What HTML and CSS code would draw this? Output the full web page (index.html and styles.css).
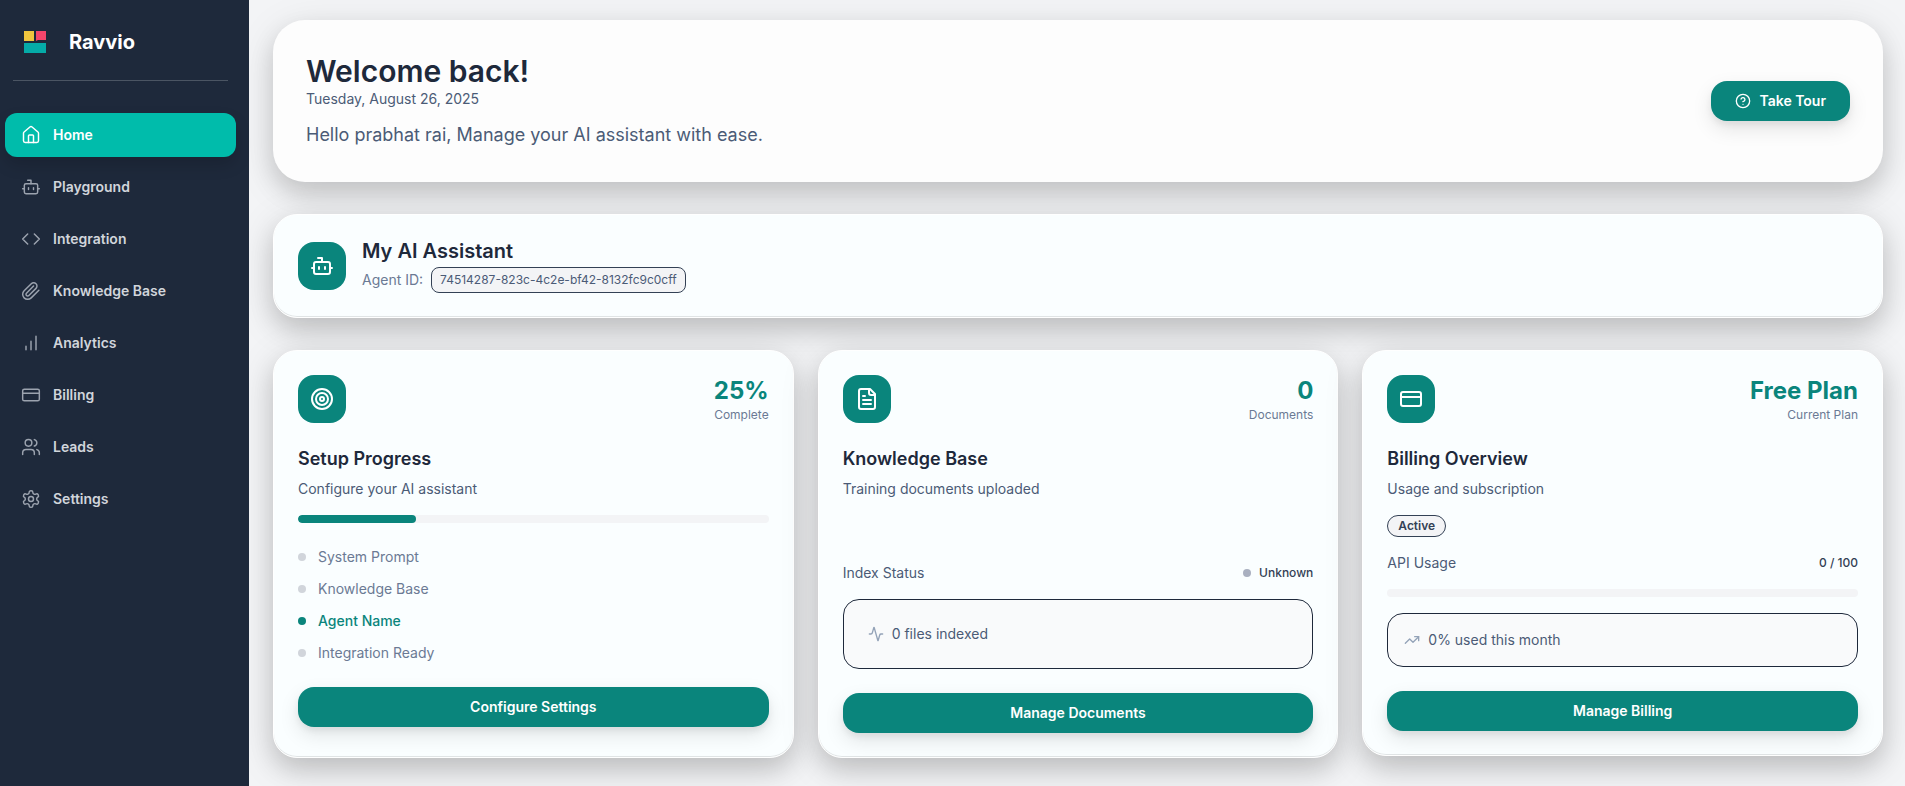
FILE: index.html
```html
<!DOCTYPE html>
<html lang="en">
<head>
<meta charset="utf-8">
<meta name="viewport" content="width=device-width, initial-scale=1">
<title>Ravvio</title>
<link rel="stylesheet" href="styles.css">
</head>
<body>
<svg class="sprite" aria-hidden="true">
  <symbol id="i-home" viewBox="0 0 24 24"><path d="M15 21v-8a1 1 0 0 0-1-1h-4a1 1 0 0 0-1 1v8"/><path d="M3 10a2 2 0 0 1 .709-1.528l7-5.999a2 2 0 0 1 2.582 0l7 5.999A2 2 0 0 1 21 10v9a2 2 0 0 1-2 2H5a2 2 0 0 1-2-2z"/></symbol>
  <symbol id="i-bot" viewBox="0 0 24 24"><path d="M12 8V4H8"/><rect width="16" height="12" x="4" y="8" rx="2"/><path d="M2 14h2M20 14h2M15 13v2M9 13v2"/></symbol>
  <symbol id="i-code" viewBox="0 0 24 24"><path d="m16 18 6-6-6-6M8 6l-6 6 6 6"/></symbol>
  <symbol id="i-clip" viewBox="0 0 24 24"><path d="m21.44 11.05-9.19 9.19a6 6 0 0 1-8.49-8.49l8.57-8.57A4 4 0 1 1 18 8.84l-8.59 8.57a2 2 0 0 1-2.83-2.83l8.49-8.48"/></symbol>
  <symbol id="i-bars" viewBox="0 0 24 24"><path d="M12 20V10M18 20V4M6 20v-4"/></symbol>
  <symbol id="i-card" viewBox="0 0 24 24"><rect width="20" height="14" x="2" y="5" rx="2"/><path d="M2 10h20"/></symbol>
  <symbol id="i-users" viewBox="0 0 24 24"><path d="M16 21v-2a4 4 0 0 0-4-4H6a4 4 0 0 0-4 4v2"/><circle cx="9" cy="7" r="4"/><path d="M22 21v-2a4 4 0 0 0-3-3.87M16 3.13a4 4 0 0 1 0 7.75"/></symbol>
  <symbol id="i-gear" viewBox="0 0 24 24"><path d="M12.22 2h-.44a2 2 0 0 0-2 2v.18a2 2 0 0 1-1 1.73l-.43.25a2 2 0 0 1-2 0l-.15-.08a2 2 0 0 0-2.73.73l-.22.38a2 2 0 0 0 .73 2.73l.15.1a2 2 0 0 1 1 1.72v.51a2 2 0 0 1-1 1.74l-.15.09a2 2 0 0 0-.73 2.73l.22.38a2 2 0 0 0 2.73.73l.15-.08a2 2 0 0 1 2 0l.43.25a2 2 0 0 1 1 1.73V20a2 2 0 0 0 2 2h.44a2 2 0 0 0 2-2v-.18a2 2 0 0 1 1-1.73l.43-.25a2 2 0 0 1 2 0l.15.08a2 2 0 0 0 2.73-.73l.22-.39a2 2 0 0 0-.73-2.73l-.15-.08a2 2 0 0 1-1-1.74v-.5a2 2 0 0 1 1-1.74l.15-.09a2 2 0 0 0 .73-2.73l-.22-.38a2 2 0 0 0-2.73-.73l-.15.08a2 2 0 0 1-2 0l-.43-.25a2 2 0 0 1-1-1.73V4a2 2 0 0 0-2-2z"/><circle cx="12" cy="12" r="3"/></symbol>
  <symbol id="i-help" viewBox="0 0 24 24"><circle cx="12" cy="12" r="10"/><path d="M9.09 9a3 3 0 0 1 5.83 1c0 2-3 3-3 3M12 17h.01"/></symbol>
  <symbol id="i-target" viewBox="0 0 24 24"><circle cx="12" cy="12" r="10"/><circle cx="12" cy="12" r="6"/><circle cx="12" cy="12" r="2"/></symbol>
  <symbol id="i-file" viewBox="0 0 24 24"><path d="M15 2H6a2 2 0 0 0-2 2v16a2 2 0 0 0 2 2h12a2 2 0 0 0 2-2V7Z"/><path d="M14 2v4a2 2 0 0 0 2 2h4M10 9H8M16 13H8M16 17H8"/></symbol>
  <symbol id="i-pulse" viewBox="0 0 24 24"><path d="M22 12h-2.48a2 2 0 0 0-1.93 1.46l-2.35 8.36a.25.25 0 0 1-.48 0L9.24 2.18a.25.25 0 0 0-.48 0l-2.35 8.36A2 2 0 0 1 4.49 12H2"/></symbol>
  <symbol id="i-trend" viewBox="0 0 24 24"><path d="m22 7-8.5 8.5-5-5L2 17"/><path d="M16 7h6v6"/></symbol>
</svg>

<div class="app">
  <aside class="sidebar">
    <div class="brand">
      <svg class="logo" viewBox="0 0 22 22" aria-hidden="true">
        <path fill="#f0c53e" d="M0 0h10v10H0z"/>
        <path fill="#f5456b" d="M12 0h10v9h-8l-2 1z"/>
        <path fill="#05aba8" d="M0 12h22v10H0z"/>
      </svg>
      <span class="brand-name">Ravvio</span>
    </div>
    <nav class="nav">
      <a class="nav-link active" href="#"><svg class="icon"><use href="#i-home"/></svg>Home</a>
      <a class="nav-link" href="#"><svg class="icon"><use href="#i-bot"/></svg>Playground</a>
      <a class="nav-link" href="#"><svg class="icon"><use href="#i-code"/></svg>Integration</a>
      <a class="nav-link" href="#"><svg class="icon"><use href="#i-clip"/></svg>Knowledge Base</a>
      <a class="nav-link" href="#"><svg class="icon"><use href="#i-bars"/></svg>Analytics</a>
      <a class="nav-link" href="#"><svg class="icon"><use href="#i-card"/></svg>Billing</a>
      <a class="nav-link" href="#"><svg class="icon"><use href="#i-users"/></svg>Leads</a>
      <a class="nav-link" href="#"><svg class="icon"><use href="#i-gear"/></svg>Settings</a>
    </nav>
  </aside>

  <main class="main">
    <section class="welcome">
      <div>
        <h1>Welcome back!</h1>
        <p class="date">Tuesday, August 26, 2025</p>
        <p class="greeting">Hello prabhat rai, Manage your AI assistant with ease.</p>
      </div>
      <button class="btn tour" type="button"><svg class="icon small"><use href="#i-help"/></svg>Take Tour</button>
    </section>

    <section class="card assistant">
      <span class="tile"><svg class="icon large"><use href="#i-bot"/></svg></span>
      <div>
        <h2>My AI Assistant</h2>
        <p class="agent">Agent ID: <code class="agent-id">74514287-823c-4c2e-bf42-8132fc9c0cff</code></p>
      </div>
    </section>

    <div class="grid">
      <section class="card panel setup">
        <header class="panel-head">
          <span class="tile"><svg class="icon large"><use href="#i-target"/></svg></span>
          <div class="stat"><strong>25%</strong><span>Complete</span></div>
        </header>
        <h3>Setup Progress</h3>
        <p class="sub">Configure your AI assistant</p>
        <div class="bar"><div class="fill" style="width:25%"></div></div>
        <ul class="steps">
          <li>System Prompt</li>
          <li>Knowledge Base</li>
          <li class="done">Agent Name</li>
          <li>Integration Ready</li>
        </ul>
        <button class="btn" type="button">Configure Settings</button>
      </section>

      <section class="card panel knowledge">
        <header class="panel-head">
          <span class="tile"><svg class="icon large"><use href="#i-file"/></svg></span>
          <div class="stat"><strong>0</strong><span>Documents</span></div>
        </header>
        <h3>Knowledge Base</h3>
        <p class="sub">Training documents uploaded</p>
        <div class="row"><span>Index Status</span><span class="value status">Unknown</span></div>
        <div class="note roomy"><svg class="icon small"><use href="#i-pulse"/></svg>0 files indexed</div>
        <button class="btn" type="button">Manage Documents</button>
      </section>

      <section class="card panel billing">
        <header class="panel-head">
          <span class="tile"><svg class="icon large"><use href="#i-card"/></svg></span>
          <div class="stat"><strong>Free Plan</strong><span>Current Plan</span></div>
        </header>
        <h3>Billing Overview</h3>
        <p class="sub">Usage and subscription</p>
        <span class="badge">Active</span>
        <div class="row"><span>API Usage</span><span class="value">0 / 100</span></div>
        <div class="bar"></div>
        <div class="note"><svg class="icon small"><use href="#i-trend"/></svg>0% used this month</div>
        <button class="btn" type="button">Manage Billing</button>
      </section>
    </div>
  </main>
</div>
</body>
</html>
```

FILE: styles.css
```css
:root {
  --navy: #1e293b;
  --slate: #4b5b76;
  --muted: #6b7a94;
  --teal: #0a857c;
  --track: #f3f4f6;
}

* { box-sizing: border-box; }

body {
  margin: 0;
  background: #f3f4f6;
  color: var(--navy);
  font-family: Inter, "Liberation Sans", sans-serif;
  font-size: 14px;
  line-height: 20px;
}

h1, h2, h3, p, ul { margin: 0; padding: 0; }

.sprite { display: none; }

.icon {
  flex: none;
  width: 20px;
  height: 20px;
  fill: none;
  stroke: currentColor;
  stroke-width: 2;
  stroke-linecap: round;
  stroke-linejoin: round;
}
.icon.small { width: 16px; height: 16px; }
.icon.large { width: 24px; height: 24px; }

.app { display: flex; min-height: 100vh; }

/* Sidebar */
.sidebar {
  flex: none;
  width: 249px;
  background: var(--navy);
}
.brand {
  display: flex;
  align-items: center;
  gap: 23px;
  height: 81px;
  margin: 0 21px 32px 13px;
  padding: 4px 0 0 11px;
  border-bottom: 1px solid #4b5563;
}
.logo { width: 22px; height: 22px; }
.brand-name { color: #fff; font-size: 20px; font-weight: 700; }
.nav {
  display: flex;
  flex-direction: column;
  gap: 8px;
  padding: 0 13px 0 5px;
}
.nav-link {
  display: flex;
  align-items: center;
  gap: 12px;
  height: 44px;
  padding: 0 16px;
  border-radius: 12px;
  color: #d1d5db;
  font-weight: 600;
  text-decoration: none;
}
.nav-link .icon { color: #9ca3af; stroke-width: 1.75; }
.nav-link.active {
  background: #00bcab;
  color: #fff;
  box-shadow: 0 8px 16px rgba(0, 0, 0, 0.15);
}
.nav-link.active .icon { color: #fff; }

/* Main column */
.main {
  flex: 1;
  min-width: 0;
  display: flex;
  flex-direction: column;
  gap: 32px;
  padding: 20px 22px 28px 24px;
  overflow: hidden;
}
.welcome {
  display: flex;
  align-items: center;
  justify-content: space-between;
  padding: 33px;
  border-radius: 32px;
  background: #fdfdfd;
  box-shadow: 0 8px 40px rgba(0, 0, 0, 0.1), 0 12px 24px rgba(0, 0, 0, 0.14);
}
.welcome h1 { font-size: 30px; font-weight: 600; line-height: 36px; }
.date { color: var(--slate); }
.greeting { margin-top: 12px; color: var(--slate); font-size: 18px; line-height: 28px; }

.btn {
  display: flex;
  align-items: center;
  justify-content: center;
  gap: 8px;
  height: 40px;
  padding: 0 24px;
  border: 0;
  border-radius: 16px;
  background: var(--teal);
  color: #fff;
  font: inherit;
  font-weight: 600;
  cursor: pointer;
  box-shadow: 0 8px 20px rgba(0, 0, 0, 0.1), 0 4px 6px rgba(0, 0, 0, 0.06);
}

.card {
  border: 1px solid #fff;
  border-radius: 24px;
  background: #fafeff;
  box-shadow: 0 8px 40px rgba(0, 0, 0, 0.12), 0 12px 24px rgba(0, 0, 0, 0.14), inset 0 -1px 0 rgba(0, 0, 0, 0.1);
}
.tile {
  display: grid;
  place-items: center;
  flex: none;
  width: 48px;
  height: 48px;
  border-radius: 16px;
  background: var(--teal);
  color: #fff;
}

.assistant {
  display: flex;
  align-items: center;
  gap: 16px;
  padding: 24px;
}
.assistant h2 { margin-bottom: 4px; font-size: 20px; font-weight: 600; line-height: 24px; }
.agent { display: flex; align-items: center; gap: 8px; color: var(--muted); }
.agent-id {
  padding: 4px 8px;
  border: 1px solid #334155;
  border-radius: 8px;
  background: var(--track);
  color: var(--slate);
  font: 12px/16px Inter, sans-serif;
}

/* Panels */
.grid {
  display: grid;
  grid-template-columns: repeat(3, minmax(0, 1fr));
  align-items: start;
  gap: 24px;
}
.panel {
  display: flex;
  flex-direction: column;
  padding: 24px;
}
.setup { padding-bottom: 30px; }
.panel-head {
  display: flex;
  align-items: center;
  justify-content: space-between;
  margin-bottom: 24px;
}
.stat { display: flex; flex-direction: column; text-align: right; }
.stat strong { color: var(--teal); font-size: 24px; font-weight: 700; line-height: 32px; }
.stat span { color: var(--muted); font-size: 12px; line-height: 16px; }
.panel h3 { font-size: 18px; font-weight: 600; line-height: 24px; }
.sub { margin: 8px 0 16px; color: var(--slate); }

.bar { height: 8px; border-radius: 4px; background: var(--track); overflow: hidden; }
.fill { height: 100%; border-radius: 4px; background: var(--teal); }

.steps {
  display: flex;
  flex-direction: column;
  gap: 12px;
  margin: 24px 0;
  list-style: none;
  color: var(--muted);
}
.steps li { display: flex; align-items: center; gap: 12px; }
.steps li::before,
.status::before {
  content: "";
  width: 8px;
  height: 8px;
  border-radius: 50%;
  background: #d1d5db;
}
.steps .done { color: var(--teal); font-weight: 500; }
.steps .done::before { background: var(--teal); }

.row { display: flex; align-items: center; justify-content: space-between; color: var(--slate); }
.value { color: #334155; font-size: 12px; font-weight: 500; }
.status { display: flex; align-items: center; gap: 8px; }
.status::before { background: #a9b0c0; }
.knowledge .row { margin: 48px 0 16px; }
.billing .row { margin: 16px 0; }

.badge {
  align-self: flex-start;
  padding: 2px 10px;
  border: 1px solid #334155;
  border-radius: 12px;
  background: var(--track);
  color: #334155;
  font-size: 12px;
  font-weight: 600;
  line-height: 16px;
}
.note {
  display: flex;
  align-items: center;
  gap: 8px;
  margin-bottom: 24px;
  padding: 16px;
  border: 1px solid var(--navy);
  border-radius: 16px;
  background: #f9fafb;
  color: var(--slate);
}
.note.roomy { padding: 24px; }
.note .icon { color: #94a3b8; }
.billing .bar { margin-bottom: 16px; }
```
